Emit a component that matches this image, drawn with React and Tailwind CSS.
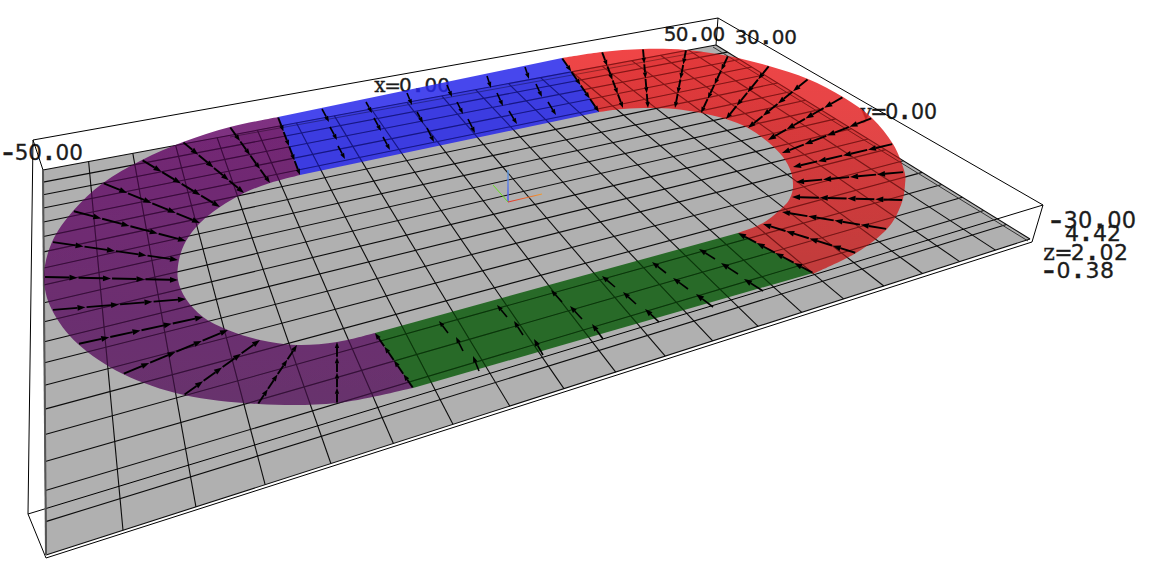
import React from 'react';

// ground plane corners on screen: back-left, back-right, front-right, front-left
const corners = [[43, 170], [716, 45], [1030, 239], [46, 555]];
const boxTop = [[33, 140], [718, 18], [1043, 205], [28, 514]];
const boxBottom = [[46, 558], [1032, 242]];

const makeHomography = ([p0, p1, p2, p3]) => {
  const dx1 = p1[0] - p2[0];
  const dx2 = p3[0] - p2[0];
  const sx = p0[0] - p1[0] + p2[0] - p3[0];
  const dy1 = p1[1] - p2[1];
  const dy2 = p3[1] - p2[1];
  const sy = p0[1] - p1[1] + p2[1] - p3[1];
  const det = dx1 * dy2 - dx2 * dy1;
  const g = (sx * dy2 - dx2 * sy) / det;
  const h = (dx1 * sy - sx * dy1) / det;
  return (u, v) => {
    const w = 1 + g * u + h * v;
    return [
      (p0[0] + (p1[0] - p0[0] + g * p1[0]) * u + (p3[0] - p0[0] + h * p3[0]) * v) / w,
      (p0[1] + (p1[1] - p0[1] + g * p1[1]) * u + (p3[1] - p0[1] + h * p3[1]) * v) / w,
    ];
  };
};

const ground = makeHomography(corners);
const cells = Array.from({ length: 20 }, (_, i) => i / 19);

// smooth line through measured points (catmull-rom)
const smooth = (pts) => {
  let d = '';
  for (let i = 0; i < pts.length - 1; i++) {
    const a = pts[Math.max(i - 1, 0)];
    const b = pts[i];
    const c = pts[i + 1];
    const e = pts[Math.min(i + 2, pts.length - 1)];
    d += ` C${b[0] + (c[0] - a[0]) / 6} ${b[1] + (c[1] - a[1]) / 6} ${c[0] - (e[0] - b[0]) / 6} ${c[1] - (e[1] - b[1]) / 6} ${c[0]} ${c[1]}`;
  }
  return d;
};

const band = (outer, inner) => {
  const back = [...inner].reverse();
  return `M${outer[0][0]} ${outer[0][1]}${smooth(outer)} L${back[0][0]} ${back[0][1]}${smooth(back)} Z`;
};

const purpleOuter = [[278, 117], [230, 127], [183, 142], [142, 160], [103, 183], [73, 211], [52, 242], [44, 277], [52, 310], [78, 344], [123, 374], [184, 395], [258, 404], [337, 403], [413, 388]];
const purpleInner = [[300, 175], [270, 183], [244, 193], [220, 207], [200, 223], [186, 241], [179, 260], [178, 280], [186, 299], [203, 317], [228, 330], [260, 340], [297, 345], [337, 342], [375, 333]];
const redOuter = [[562, 58], [602, 52], [643, 49], [686, 50], [728, 56], [769, 66], [808, 79], [843, 97], [872, 118], [893, 144], [904, 170], [905, 185], [901, 205], [887, 229], [856, 253], [813, 274]];
const redInner = [[599, 112], [623, 109], [650, 108], [675, 109], [701, 113], [726, 119], [748, 128], [768, 142], [783, 157], [791, 172], [793, 187], [790, 198], [783, 207], [763, 223], [738, 233]];
const purplePath = band(purpleOuter, purpleInner);
const redPath = band(redOuter, redInner);
const bluePoints = '278,117 562,58 599,112 300,175';
const greenPoints = '375,333 738,233 813,273 413,388';

// radial arrow chains: outer end, inner end
const chains = [
  [[278, 117], [300, 175]], [[230, 127], [270, 183]], [[183, 142], [244, 193]], [[142, 160], [220, 207]],
  [[103, 183], [200, 223]], [[73, 211], [186, 241]], [[52, 242], [178, 260]], [[44, 277], [178, 280]],
  [[52, 310], [186, 299]], [[78, 344], [203, 317]], [[123, 374], [228, 330]], [[184, 395], [260, 340]],
  [[258, 404], [297, 345]], [[337, 403], [337, 342]], [[413, 388], [375, 333]],
  [[562, 58], [599, 112]], [[602, 52], [623, 108]], [[643, 49], [648, 108]], [[686, 50], [675, 108]],
  [[728, 56], [701, 113]], [[769, 66], [726, 119]], [[808, 79], [748, 128]], [[843, 97], [768, 140]],
  [[872, 118], [782, 153]], [[893, 144], [793, 167]], [[904, 172], [796, 182]], [[903, 200], [792, 197]],
  [[887, 229], [782, 212]], [[856, 253], [763, 224]], [[813, 273], [738, 233]],
];

const shortArrows = [
  [[322, 109], [329, 122]], [[330, 127], [337, 140]], [[338, 146], [345, 159]],
  [[366, 102], [372, 113]], [[374, 118], [381, 131]], [[383, 137], [390, 150]],
  [[407, 93], [412, 105]], [[417, 112], [423, 123]], [[427, 128], [434, 142]],
  [[447, 85], [452, 97]], [[457, 102], [463, 114]], [[468, 119], [475, 133]],
  [[487, 76], [491, 88]], [[497, 93], [503, 106]], [[509, 111], [517, 124]],
  [[525, 67], [529, 79]], [[536, 84], [542, 97]], [[548, 102], [556, 115]],
  [[448, 333], [439, 321]], [[463, 351], [456, 337]], [[479, 371], [473, 356]],
  [[507, 317], [497, 305]], [[523, 335], [514, 321]], [[543, 355], [534, 339]],
  [[562, 302], [551, 290]], [[582, 319], [570, 306]], [[603, 339], [592, 324]],
  [[615, 287], [602, 276]], [[636, 304], [623, 292]], [[659, 322], [645, 309]],
  [[666, 273], [652, 262]], [[688, 289], [673, 278]], [[713, 307], [696, 294]],
  [[715, 259], [699, 249]], [[738, 274], [721, 263]], [[763, 291], [744, 279]],
];

// x = centre of the first character, adv = distance between characters
const labels = [
  { text: '-50.00', x: 8, adv: 13.6, y: 160, size: 21.5 },
  { text: 'x=0.00', x: 380, adv: 12.7, y: 92, size: 20 },
  { text: '50.00', x: 670, adv: 12.2, y: 41, size: 20 },
  { text: '30.00', x: 741, adv: 12.4, y: 44, size: 20 },
  { text: 'y=0.00', x: 866, adv: 12.9, y: 119, size: 20.5 },
  { text: '-30.00', x: 1056, adv: 14.6, y: 228, size: 22.5 },
  { text: '4.42', x: 1072, adv: 14, y: 241, size: 22 },
  { text: 'z=2.02', x: 1049, adv: 14.4, y: 260, size: 22 },
  { text: '-0.38', x: 1049, adv: 14.5, y: 278, size: 22 },
];

const Label = ({ text, x, adv, y, size }) => (
  <text
    x={[...text].map((_, i) => x + i * adv).join(' ')}
    y={y}
    fontSize={size}
    textAnchor="middle"
    fill="#1c1c1c"
    stroke="#1c1c1c"
    strokeWidth="0.3"
    className="font-['DejaVu_Sans',sans-serif]"
  >
    {[...text].map((c, i) => {
      if (c === '-') {
        return <tspan key={i} fontSize={size * 1.55} dy={size * 0.12}>{c}</tspan>;
      }
      if (c === '.') {
        return <tspan key={i} fontWeight="700">{c}</tspan>;
      }
      if (/[xyz]/.test(c)) {
        return <tspan key={i} className="font-['DejaVu_Serif',serif]">{c}</tspan>;
      }
      return <tspan key={i} dy={i === 1 && text[0] === '-' ? -size * 0.12 : 0}>{c}</tspan>;
    })}
  </text>
);

const Arrow = ({ from, to, line = 1.6, maxHead = 8 }) => {
  const dx = to[0] - from[0];
  const dy = to[1] - from[1];
  const len = Math.hypot(dx, dy) || 1;
  const ux = dx / len;
  const uy = dy / len;
  const headLen = Math.min(Math.max(len * 0.4, 6), maxHead);
  const halfW = headLen * 0.36;
  const bx = to[0] - ux * headLen;
  const by = to[1] - uy * headLen;
  return (
    <g>
      <line x1={from[0]} y1={from[1]} x2={bx} y2={by} stroke="#000" strokeWidth={line} />
      <polygon
        points={`${to[0]},${to[1]} ${bx - uy * halfW},${by + ux * halfW} ${bx + uy * halfW},${by - ux * halfW}`}
        fill="#000"
      />
    </g>
  );
};

const Chain = ({ from, to }) => {
  const at = (t) => [from[0] + (to[0] - from[0]) * t, from[1] + (to[1] - from[1]) * t];
  return (
    <g>
      {[0, 1, 2, 3].map((i) => (
        <Arrow key={i} from={at(i / 4 + 0.008)} to={at((i + 1) / 4)} line={1.9} />
      ))}
    </g>
  );
};

const Edge = ({ a, b, color = '#000', width = 1 }) => (
  <line x1={a[0]} y1={a[1]} x2={b[0]} y2={b[1]} stroke={color} strokeWidth={width} />
);

const Grid = ({ color }) => (
  <g>
    {cells.map((t) => (
      <g key={t}>
        <Edge a={ground(t, 0)} b={ground(t, 1)} color={color} width={1.1} />
        <Edge a={ground(0, t)} b={ground(1, t)} color={color} width={1.1} />
      </g>
    ))}
  </g>
);

const App = () => {
  return (
    <div className="w-[1170px] h-[563px] bg-white overflow-hidden">
      <svg width="1170" height="563" viewBox="0 0 1170 563" className="block">
        <defs>
          <linearGradient id="redFill" gradientUnits="userSpaceOnUse" x1="0" y1="50" x2="0" y2="275">
            <stop offset="0" stopColor="#ed2527" />
            <stop offset="1" stopColor="#c42828" />
          </linearGradient>
          <linearGradient id="purpleFill" gradientUnits="userSpaceOnUse" x1="0" y1="118" x2="0" y2="404">
            <stop offset="0" stopColor="#690e6b" />
            <stop offset="1" stopColor="#5c1e62" />
          </linearGradient>
          <linearGradient id="triadRed" gradientUnits="userSpaceOnUse" x1="508" y1="202" x2="542" y2="194">
            <stop offset="0" stopColor="#e0302c" />
            <stop offset="1" stopColor="#f09a30" />
          </linearGradient>
          <linearGradient id="triadBlue" gradientUnits="userSpaceOnUse" x1="508" y1="202" x2="508" y2="170">
            <stop offset="0" stopColor="#4a50f0" />
            <stop offset="1" stopColor="#62a0e0" />
          </linearGradient>
          <clipPath id="ringClip">
            <path d={purplePath} />
            <path d={redPath} />
            <polygon points={bluePoints} />
            <polygon points={greenPoints} />
          </clipPath>
        </defs>

        {labels.map((l) => (
          <Label key={l.text} {...l} />
        ))}

        <polygon points={corners.map((p) => p.join(',')).join(' ')} fill="#b0b0b0" />
        <Grid color="#0c0c0c" />

        {boxTop.map((p, i) => (
          <Edge key={i} a={p} b={boxTop[(i + 1) % 4]} />
        ))}
        <Edge a={boxTop[0]} b={corners[0]} />
        <Edge a={boxTop[1]} b={corners[1]} />
        <Edge a={boxTop[2]} b={boxBottom[1]} />
        <Edge a={boxTop[3]} b={boxBottom[0]} />
        <Edge a={boxBottom[0]} b={boxBottom[1]} />
        <Edge a={[713, 47]} b={[1028, 241]} color="#333" />
        <Edge a={corners[0]} b={corners[3]} color="#555" width={2} />

        <g fillOpacity="0.85">
          <path d={purplePath} fill="url(#purpleFill)" />
          <path d={redPath} fill="url(#redFill)" />
          <polygon points={bluePoints} fill="#2828ea" />
          <polygon points={greenPoints} fill="#125f12" />
        </g>

        <g clipPath="url(#ringClip)" opacity="0.35">
          <Grid color="#000" />
          <Edge a={[230, 137]} b={[716, 49]} />
          <Edge a={[713, 47]} b={[1028, 241]} />
        </g>

        <Edge a={[508, 202]} b={[508, 170]} color="url(#triadBlue)" width={1.4} />
        <Edge a={[508, 202]} b={[493, 185]} color="#66e020" />
        <Edge a={[508, 202]} b={[542, 194]} color="url(#triadRed)" width={1.2} />

        {chains.map(([from, to], i) => (
          <Chain key={i} from={from} to={to} />
        ))}
        {shortArrows.map(([from, to], i) => (
          <Arrow key={i} from={from} to={to} />
        ))}
      </svg>
    </div>
  );
};

export default App;
